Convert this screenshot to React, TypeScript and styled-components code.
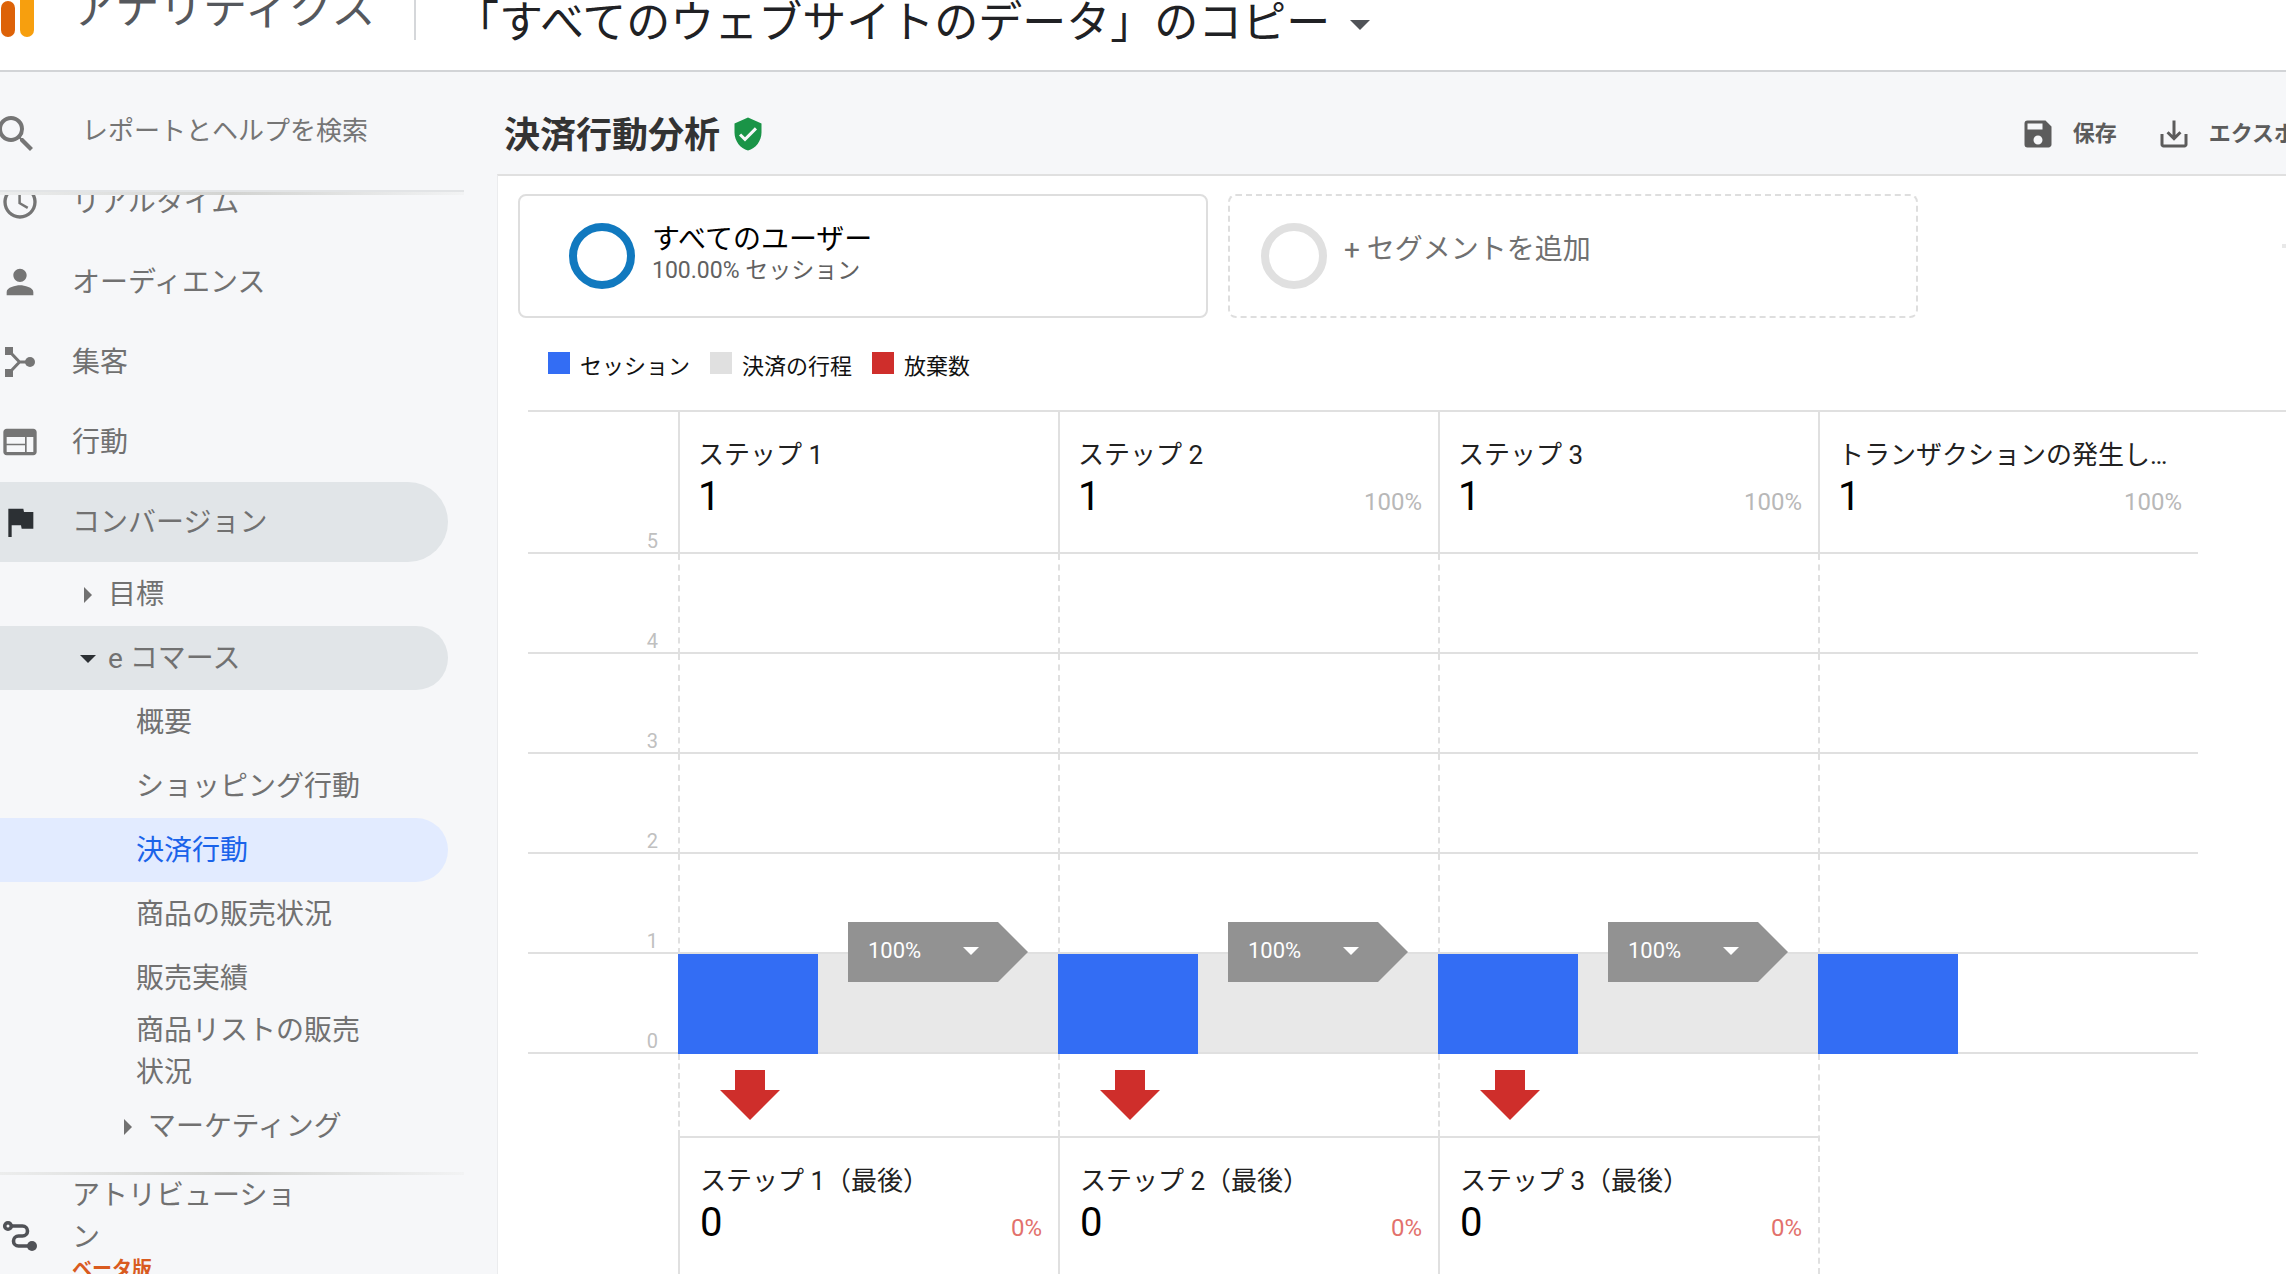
import React from "react";
import styled, { createGlobalStyle, css } from "styled-components";
import { MdAccessTime, MdFlag, MdPerson, MdSave, MdSaveAlt, MdSearch, MdVerifiedUser, MdWeb } from "react-icons/md";

const line = "#e0e0e0";

const GlobalStyle = createGlobalStyle`
  *, *::before, *::after { box-sizing: border-box; }
  html, body { margin: 0; background: #fff; }
  body { overflow: hidden; }
  body, button, input { font-family: Roboto, "Noto Sans CJK JP", sans-serif; }
  button { border: 0; padding: 0; background: none; color: inherit; text-align: left; cursor: pointer; }
  a { color: inherit; text-decoration: none; }
  h1, p, ul { margin: 0; padding: 0; }
  ul { list-style: none; }
  svg { display: block; flex: none; }
`;

const Shell = styled.div`
  display: flex;
  flex-direction: column;
  height: 100vh;
  overflow: hidden;
  background: #f6f7f9;
`;

/* ---------- top bar ---------- */

const TopBar = styled.header`
  display: flex;
  flex: none;
  align-items: flex-start;
  height: 72px;
  border-bottom: 2px solid #d2d4d7;
  background: #fff;
`;

const Brand = styled.a`
  display: flex;
  align-items: flex-start;
  gap: 38px;
  width: 414px;
  color: #55585d;
  font-size: 44px;
  line-height: 18px;
  white-space: nowrap;
`;

const AccountPicker = styled.button`
  display: flex;
  align-items: flex-start;
  gap: 20px;
  height: 40px;
  padding-left: 39px;
  border-left: 2px solid #d5d7da;
  color: #202124;
  font-size: 44px;
  line-height: 46px;
  white-space: nowrap;

  > span {
    margin-top: 20px;
  }
`;

const Triangle = styled.span<{ $dir: "down" | "right"; $size: number; $color: string }>`
  flex: none;
  width: 0;
  height: 0;
  border: ${(p) => p.$size}px solid transparent;
  ${(p) =>
    p.$dir === "down"
      ? css`
          border-top-color: ${p.$color};
          border-bottom-width: 0;
        `
      : css`
          border-left-color: ${p.$color};
          border-right-width: 0;
        `}
`;

/* ---------- side navigation ---------- */

const Body = styled.div`
  display: flex;
  flex: 1;
  min-height: 0;
`;

const Sidebar = styled.aside`
  display: flex;
  flex: none;
  flex-direction: column;
  width: 497px;
  padding-right: 33px;
  overflow: hidden;
`;

const SearchRow = styled.label`
  display: flex;
  flex: none;
  align-items: center;
  gap: 42px;
  height: 120px;
  border-bottom: 2px solid #e2e4e6;
  color: #757575;

  svg {
    width: 48px;
    height: 54px;
    margin-left: -8px;
    padding-top: 6px;
  }
`;

const SearchInput = styled.input`
  flex: 1;
  min-width: 0;
  padding: 0;
  border: 0;
  outline: 0;
  background: none;
  font-size: 26px;
  line-height: 40px;

  &::placeholder {
    color: #757575;
    opacity: 1;
  }
`;

const Fade = styled.div`
  flex: none;
  height: 3px;
  background: linear-gradient(to right, #eceded, #d2d3d1 50%, #f2f3f4);
`;

const NavScroll = styled.nav`
  flex: none;
  padding-bottom: 14px;
  overflow: hidden;
`;

const NavList = styled.ul`
  margin-top: -33px;
`;

const NavLink = styled.a<{ $open?: boolean }>`
  display: flex;
  align-items: center;
  gap: 32px;
  width: 448px;
  height: 80px;
  border-radius: 0 40px 40px 0;
  background: ${(p) => (p.$open ? "#e1e5e8" : "transparent")};
  color: #717171;
  font-size: 28px;
  line-height: 42px;
  white-space: nowrap;

  svg {
    width: 40px;
    height: 40px;
    color: ${(p) => (p.$open ? "#2c3034" : "#757575")};
  }
`;

const NavLabel = styled.span`
  padding-top: 2px;
`;

const SubLink = styled.a<{ $indent: number; $tone?: "open" | "active" }>`
  display: flex;
  align-items: center;
  width: 448px;
  min-height: 64px;
  padding: 0 84px 0 ${(p) => p.$indent}px;
  border-radius: 0 32px 32px 0;
  background: ${(p) => (p.$tone === "open" ? "#e1e5e8" : p.$tone === "active" ? "#e2ebff" : "transparent")};
  color: ${(p) => (p.$tone === "active" ? "#1a63ea" : "#717171")};
  font-size: 28px;
  line-height: 42px;

  &:not(:has(br)) {
    padding-top: 2px;
  }
`;

const Marker = styled.span`
  display: flex;
  flex: none;
  justify-content: center;
  width: 16px;
  margin-right: 12px;
`;

const FooterLink = styled.a`
  display: flex;
  flex: none;
  align-items: center;
  gap: 32px;
  color: #717171;
  font-size: 28px;
  line-height: 42px;
`;

const FooterText = styled.span`
  width: 232px;
  padding-bottom: 18px;
`;

const Beta = styled.strong`
  display: block;
  color: #d95b1f;
  font-size: 20px;
  line-height: 20px;
`;

/* ---------- report ---------- */

const Main = styled.main`
  display: flex;
  flex: 1;
  flex-direction: column;
  min-width: 0;
  overflow: hidden;
`;

const TitleBar = styled.div`
  display: flex;
  flex: none;
  align-items: center;
  gap: 10px;
  height: 102px;
  padding: 22px 0 0 7px;

  > svg {
    width: 36px;
    height: 36px;
    color: #1a9447;
  }
`;

const Title = styled.h1`
  padding-top: 4px;
  color: #333;
  font-size: 36px;
  font-weight: 700;
  line-height: 44px;
`;

const Actions = styled.div`
  display: flex;
  gap: 39px;
  margin: 0 -54px 0 auto;
`;

const Action = styled.button`
  display: flex;
  flex: none;
  align-items: center;
  gap: 17px;
  color: #5c5c5c;
  font-size: 22px;
  font-weight: 700;
  line-height: 36px;
  white-space: nowrap;

  svg {
    width: 36px;
    height: 36px;
  }
`;

const Panel = styled.section`
  display: flex;
  flex: 1;
  flex-direction: column;
  min-height: 0;
  padding: 18px 0 0 20px;
  border-top: 2px solid ${line};
  border-left: 1px solid #ebecee;
  background: #fff;
`;

const Segments = styled.div`
  display: flex;
  flex: none;
  gap: 20px;
`;

const Segment = styled.button<{ $empty?: boolean }>`
  display: flex;
  flex: 0 1 690px;
  align-items: center;
  gap: 17px;
  height: 124px;
  padding-left: ${(p) => (p.$empty ? 31 : 49)}px;
  border: 2px ${(p) => (p.$empty ? "dashed" : "solid")} #dedede;
  border-radius: 8px;
`;

const Ring = styled.span<{ $color: string }>`
  flex: none;
  width: 66px;
  height: 66px;
  border: 8px solid ${(p) => p.$color};
  border-radius: 50%;
`;

const SegmentText = styled.span`
  display: flex;
  flex-direction: column;
  padding-bottom: 4px;
`;

const SegmentName = styled.span<{ $muted?: boolean }>`
  padding-bottom: ${(p) => (p.$muted ? 8 : 0)}px;
  color: ${(p) => (p.$muted ? "#707070" : "#000")};
  font-size: 28px;
  line-height: 34px;
`;

const SegmentShare = styled.span`
  color: #616161;
  font-size: 23px;
  line-height: 28px;
`;

const Handle = styled.span`
  width: 20px;
  height: 4px;
  margin: 50px -16px 0 auto;
  background: #e8e8e8;
`;

const Legend = styled.ul`
  display: flex;
  flex: none;
  gap: 20px;
  margin: 34px 0 28px;
  padding-left: 30px;
`;

const LegendItem = styled.li<{ $color: string }>`
  display: flex;
  gap: 10px;
  color: #111;
  font-size: 22px;
  line-height: 30px;

  &::before {
    content: "";
    width: 22px;
    height: 22px;
    background: ${(p) => p.$color};
  }
`;

/* ---------- funnel ---------- */

const Funnel = styled.div`
  display: grid;
  flex: 1;
  grid-template-columns: 150px repeat(4, 380px);
  min-height: 0;
  margin-left: 10px;
  border-top: 2px solid ${line};
`;

const Column = styled.div`
  display: flex;
  flex-direction: column;
  min-width: 0;
`;

const AxisCell = styled.div<{ $first?: boolean }>`
  display: flex;
  flex: none;
  align-items: flex-end;
  justify-content: flex-end;
  height: ${(p) => (p.$first ? 142 : 100)}px;
  padding-right: 20px;
  border-bottom: 2px solid ${line};
  color: #c0c0c0;
  font-size: 20px;
  line-height: 22px;
`;

const StepBox = styled.div<{ $exit?: boolean }>`
  display: flex;
  flex: ${(p) => (p.$exit ? "1" : "none")};
  flex-direction: column;
  height: 142px;
  padding: ${(p) => (p.$exit ? "25px 16px 0 20px" : "25px 16px 0 18px")};
  border: 0 solid ${line};
  border-left-width: 2px;
  border-top-width: ${(p) => (p.$exit ? 2 : 0)}px;
  border-bottom-width: ${(p) => (p.$exit ? 0 : 2)}px;
`;

const StepName = styled.p`
  color: #212121;
  font-size: 26px;
  line-height: 36px;
  white-space: nowrap;
`;

const StepFigures = styled.p`
  display: flex;
  align-items: baseline;
  justify-content: space-between;
  line-height: 48px;
`;

const StepCount = styled.span`
  color: #000;
  font-size: 40px;
`;

const StepShare = styled.span<{ $exit?: boolean }>`
  color: ${(p) => (p.$exit ? "#e2716c" : "#b8b8b8")};
  font-size: 24px;
`;

const GridCell = styled.div`
  flex: none;
  height: 100px;
  border-bottom: 2px solid ${line};
  border-left: 2px dashed ${line};
`;

const BarCell = styled.div`
  display: flex;
  flex: none;
  height: 100px;
`;

const Bar = styled.div`
  width: 140px;
  background: #336df4;
`;

const Flow = styled.div<{ $filled: boolean }>`
  position: relative;
  flex: 1;
  border-bottom: 2px solid ${line};
  background: ${(p) => (p.$filled ? "#e8e8e8" : "transparent")};
`;

const FlowTag = styled.button`
  position: absolute;
  top: -32px;
  left: 30px;
  display: flex;
  align-items: center;
  justify-content: space-between;
  width: 180px;
  height: 60px;
  padding: 0 49px 2px 20px;
  background: #929292;
  clip-path: polygon(0 0, 150px 0, 100% 50%, 150px 100%, 0 100%);
  color: #fff;
  font-size: 22px;
  line-height: 28px;
`;

const DropOff = styled.div`
  flex: none;
  height: 82px;
  padding: 16px 0 0 40px;
  border-left: 2px dashed ${line};
`;

const OpenEnd = styled.div`
  flex: 1;
  border-left: 2px dashed ${line};
`;

/* ---------- drawings ---------- */

const LogoMark = () => (
  <svg width="34" height="40" viewBox="0 0 34 40" aria-hidden="true">
    <rect x="1" y="1" width="14" height="36" rx="7" fill="#dd6208" />
    <rect x="20" y="-30" width="14" height="67" rx="7" fill="#f79f0e" />
  </svg>
);

const BranchIcon = () => (
  <svg viewBox="0 0 40 40" fill="currentColor" aria-hidden="true">
    <path d="M5 5h8v8H5zM5 27h8v8H5z" />
    <circle cx="30" cy="20" r="5" />
    <path d="M10 10 19.500 20 10 30M19 20h10" fill="none" stroke="currentColor" strokeWidth="3" />
  </svg>
);

const PathIcon = () => (
  <svg width="40" height="40" viewBox="0 0 40 40" fill="none" stroke="#505257" strokeWidth="3.600" aria-hidden="true">
    <circle cx="8" cy="10" r="3.300" />
    <path d="M12 10h10.500a4.800 4.800 0 0 1 0 10h-4a5 5 0 0 0 0 10H30" />
    <circle cx="32" cy="30" r="5" fill="#505257" stroke="none" />
  </svg>
);

const DownArrow = () => (
  <svg width="60" height="50" viewBox="0 0 60 50" fill="#cf2e2b" aria-hidden="true">
    <path d="M15 0h30v20h15L30 50 0 20h15z" />
  </svg>
);

const reports = [
  { label: "リアルタイム", icon: <MdAccessTime /> },
  { label: "オーディエンス", icon: <MdPerson /> },
  { label: "集客", icon: <BranchIcon /> },
  { label: "行動", icon: <MdWeb /> },
  { label: "コンバージョン", icon: <MdFlag />, open: true },
];

const ecommerce = ["概要", "ショッピング行動", "決済行動", "商品の販売状況", "販売実績"];

const steps = [
  { name: "ステップ 1", count: 1, share: "", flow: "100%", exit: { name: "ステップ 1（最後）", count: 0, share: "0%" } },
  { name: "ステップ 2", count: 1, share: "100%", flow: "100%", exit: { name: "ステップ 2（最後）", count: 0, share: "0%" } },
  { name: "ステップ 3", count: 1, share: "100%", flow: "100%", exit: { name: "ステップ 3（最後）", count: 0, share: "0%" } },
  { name: "トランザクションの発生し…", count: 1, share: "100%" },
];

interface StepProps {
  name: string;
  count: number;
  share: string;
  exit?: boolean;
}

const Step = ({ name, count, share, exit }: StepProps) => (
  <StepBox $exit={exit}>
    <StepName>{name}</StepName>
    <StepFigures>
      <StepCount>{count}</StepCount>
      {share && <StepShare $exit={exit}>{share}</StepShare>}
    </StepFigures>
  </StepBox>
);

export default function App() {
  return (
    <Shell>
      <GlobalStyle />
      <TopBar>
        <Brand href="#">
          <LogoMark />
          アナリティクス
        </Brand>
        <AccountPicker type="button">
          「すべてのウェブサイトのデータ」のコピー
          <Triangle $dir="down" $size={10} $color="#505357" />
        </AccountPicker>
      </TopBar>
      <Body>
        <Sidebar>
          <SearchRow>
            <MdSearch />
            <SearchInput type="text" aria-label="レポートとヘルプを検索" placeholder="レポートとヘルプを検索" />
          </SearchRow>
          <Fade />
          <NavScroll>
            <NavList>
              {reports.map((r) => (
                <li key={r.label}>
                  <NavLink href="#" $open={r.open}>
                    {r.icon}
                    <NavLabel>{r.label}</NavLabel>
                  </NavLink>
                </li>
              ))}
              <li>
                <SubLink href="#" $indent={80}>
                  <Marker>
                    <Triangle $dir="right" $size={8} $color="#717171" />
                  </Marker>
                  目標
                </SubLink>
              </li>
              <li>
                <SubLink href="#" $indent={80} $tone="open">
                  <Marker>
                    <Triangle $dir="down" $size={8} $color="#2c3034" />
                  </Marker>
                  e コマース
                </SubLink>
              </li>
              {ecommerce.map((label) => (
                <li key={label}>
                  <SubLink href="#" $indent={136} $tone={label === "決済行動" ? "active" : undefined}>
                    {label}
                  </SubLink>
                </li>
              ))}
              <li>
                <SubLink href="#" $indent={136}>
                  <span>
                    商品リストの販売
                    <br />
                    状況
                  </span>
                </SubLink>
              </li>
              <li>
                <SubLink href="#" $indent={120}>
                  <Marker>
                    <Triangle $dir="right" $size={8} $color="#717171" />
                  </Marker>
                  マーケティング
                </SubLink>
              </li>
            </NavList>
          </NavScroll>
          <Fade />
          <FooterLink href="#">
            <PathIcon />
            <FooterText>
              アトリビューション
              <Beta>ベータ版</Beta>
            </FooterText>
          </FooterLink>
        </Sidebar>
        <Main>
          <TitleBar>
            <Title>決済行動分析</Title>
            <MdVerifiedUser />
            <Actions>
              <Action type="button">
                <MdSave />
                保存
              </Action>
              <Action type="button">
                <MdSaveAlt />
                エクスポート
              </Action>
            </Actions>
          </TitleBar>
          <Panel>
            <Segments>
              <Segment type="button">
                <Ring $color="#1179bf" />
                <SegmentText>
                  <SegmentName>すべてのユーザー</SegmentName>
                  <SegmentShare>100.00% セッション</SegmentShare>
                </SegmentText>
              </Segment>
              <Segment type="button" $empty>
                <Ring $color="#e0e0e0" />
                <SegmentText>
                  <SegmentName $muted>+ セグメントを追加</SegmentName>
                </SegmentText>
              </Segment>
              <Handle />
            </Segments>
            <Legend>
              <LegendItem $color="#336df4">セッション</LegendItem>
              <LegendItem $color="#e0e0e0">決済の行程</LegendItem>
              <LegendItem $color="#cf2e2b">放棄数</LegendItem>
            </Legend>
            <Funnel>
              <Column>
                {[5, 4, 3, 2, 1, 0].map((n) => (
                  <AxisCell key={n} $first={n === 5}>
                    {n}
                  </AxisCell>
                ))}
              </Column>
              {steps.map((s) => (
                <Column key={s.name}>
                  <Step name={s.name} count={s.count} share={s.share} />
                  <GridCell />
                  <GridCell />
                  <GridCell />
                  <GridCell />
                  <BarCell>
                    <Bar />
                    <Flow $filled={Boolean(s.flow)}>
                      {s.flow && (
                        <FlowTag type="button">
                          {s.flow}
                          <Triangle $dir="down" $size={8} $color="#fff" />
                        </FlowTag>
                      )}
                    </Flow>
                  </BarCell>
                  {s.exit ? (
                    <>
                      <DropOff>
                        <DownArrow />
                      </DropOff>
                      <Step name={s.exit.name} count={s.exit.count} share={s.exit.share} exit />
                    </>
                  ) : (
                    <OpenEnd />
                  )}
                </Column>
              ))}
            </Funnel>
          </Panel>
        </Main>
      </Body>
    </Shell>
  );
}
